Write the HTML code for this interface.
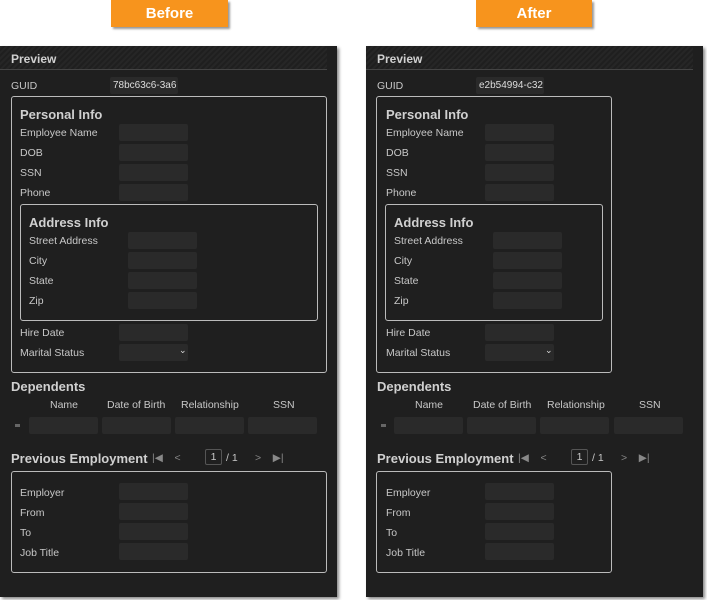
<!DOCTYPE html>
<html><head><style>
*{box-sizing:border-box;margin:0;padding:0}
body{width:707px;height:600px;background:#fff;position:relative;overflow:hidden;font-family:"Liberation Sans",sans-serif;font-size:10.5px;color:#c8c8c8}
.tag{position:absolute;top:0;height:27px;background:#f7941d;color:#fff;font-weight:bold;font-size:15px;text-align:center;line-height:27px;box-shadow:2px 2px 2px #999}
.panel{position:absolute;top:46px;height:551px;width:337px;background:#1f1f1f;box-shadow:2px 2px 3px #888}
.hdr{position:absolute;left:0;top:0;width:327px;height:24px;border-bottom:1px solid #444;background:repeating-linear-gradient(135deg,#262626 0 2px,#1f1f1f 2px 4px)}
.a{position:absolute;white-space:nowrap;padding-top:1px}
.t{font-weight:bold;color:#d0d0d0}
.in{position:absolute;width:69px;height:17px;background:#2a2a2a;border-radius:2px}
.g{white-space:nowrap;overflow:hidden;font-size:10px;color:#ddd;padding:3px 0 0 3px}
.box{position:absolute;border:1px solid #bbb;border-radius:3px}
</style></head><body>
<div class="tag" style="left:111px;width:117px">Before</div>
<div class="tag" style="left:476px;width:116px">After</div>

<!-- LEFT -->
<div class="panel" style="left:0">
<div class="hdr"></div>
<div class="a t" style="left:11px;top:5px;font-size:12px">Preview</div>
<div class="a" style="left:11px;top:33px">GUID</div>
<div class="in g" style="left:110px;top:31px;width:68px">78bc63c6-3a6</div>
<div class="box" style="left:11px;top:50px;width:316px;height:277px"></div>
<div class="a t" style="left:20px;top:60px;font-size:13px">Personal Info</div>
<div class="a" style="left:20px;top:80px">Employee Name</div><div class="in" style="left:119px;top:78px"></div>
<div class="a" style="left:20px;top:100px">DOB</div><div class="in" style="left:119px;top:98px"></div>
<div class="a" style="left:20px;top:120px">SSN</div><div class="in" style="left:119px;top:118px"></div>
<div class="a" style="left:20px;top:140px">Phone</div><div class="in" style="left:119px;top:138px"></div>
<div class="box" style="left:20px;top:158px;width:298px;height:117px"></div>
<div class="a t" style="left:29px;top:168px;font-size:13px">Address Info</div>
<div class="a" style="left:29px;top:188px">Street Address</div><div class="in" style="left:128px;top:186px"></div>
<div class="a" style="left:29px;top:208px">City</div><div class="in" style="left:128px;top:206px"></div>
<div class="a" style="left:29px;top:228px">State</div><div class="in" style="left:128px;top:226px"></div>
<div class="a" style="left:29px;top:248px">Zip</div><div class="in" style="left:128px;top:246px"></div>
<div class="a" style="left:20px;top:280px">Hire Date</div><div class="in" style="left:119px;top:278px"></div>
<div class="a" style="left:20px;top:300px">Marital Status</div><div class="in" style="left:119px;top:298px"><span class="a" style="left:60px;top:0px;font-size:9px;color:#ddd">&#8964;</span></div>
<div class="a t" style="left:11px;top:332px;font-size:13px">Dependents</div>
<div class="a" style="left:50px;top:352px">Name</div>
<div class="a" style="left:107px;top:352px">Date of Birth</div>
<div class="a" style="left:181px;top:352px">Relationship</div>
<div class="a" style="left:273px;top:352px">SSN</div>
<div class="a" style="left:15px;top:378px;width:5px;height:3px;background:#666;padding:0"></div>
<div class="in" style="left:29px;top:371px"></div><div class="in" style="left:102px;top:371px"></div><div class="in" style="left:175px;top:371px"></div><div class="in" style="left:248px;top:371px"></div>
<div class="a t" style="left:11px;top:404px;font-size:13px">Previous Employment</div>
<div class="a" style="left:152px;top:405px;color:#888">|◀&nbsp;&nbsp;&nbsp;&nbsp;&lt;</div>
<div class="a" style="left:205px;top:403px;width:17px;height:16px;border:1px solid #555;border-radius:2px;text-align:center;line-height:14px;padding:0">1</div>
<div class="a" style="left:226px;top:405px">/ 1</div>
<div class="a" style="left:255px;top:405px;color:#888">&gt;&nbsp;&nbsp;&nbsp;&nbsp;▶|</div>
<div class="box" style="left:11px;top:425px;width:316px;height:102px"></div>
<div class="a" style="left:20px;top:440px">Employer</div><div class="in" style="left:119px;top:437px"></div>
<div class="a" style="left:20px;top:460px">From</div><div class="in" style="left:119px;top:457px"></div>
<div class="a" style="left:20px;top:480px">To</div><div class="in" style="left:119px;top:477px"></div>
<div class="a" style="left:20px;top:500px">Job Title</div><div class="in" style="left:119px;top:497px"></div>
</div>

<!-- RIGHT -->
<div class="panel" style="left:366px">
<div class="hdr"></div>
<div class="a t" style="left:11px;top:5px;font-size:12px">Preview</div>
<div class="a" style="left:11px;top:33px">GUID</div>
<div class="in g" style="left:110px;top:31px;width:68px">e2b54994-c32</div>
<div class="box" style="left:10px;top:50px;width:236px;height:277px"></div>
<div class="a t" style="left:20px;top:60px;font-size:13px">Personal Info</div>
<div class="a" style="left:20px;top:80px">Employee Name</div><div class="in" style="left:119px;top:78px"></div>
<div class="a" style="left:20px;top:100px">DOB</div><div class="in" style="left:119px;top:98px"></div>
<div class="a" style="left:20px;top:120px">SSN</div><div class="in" style="left:119px;top:118px"></div>
<div class="a" style="left:20px;top:140px">Phone</div><div class="in" style="left:119px;top:138px"></div>
<div class="box" style="left:19px;top:158px;width:218px;height:117px"></div>
<div class="a t" style="left:28px;top:168px;font-size:13px">Address Info</div>
<div class="a" style="left:28px;top:188px">Street Address</div><div class="in" style="left:127px;top:186px"></div>
<div class="a" style="left:28px;top:208px">City</div><div class="in" style="left:127px;top:206px"></div>
<div class="a" style="left:28px;top:228px">State</div><div class="in" style="left:127px;top:226px"></div>
<div class="a" style="left:28px;top:248px">Zip</div><div class="in" style="left:127px;top:246px"></div>
<div class="a" style="left:20px;top:280px">Hire Date</div><div class="in" style="left:119px;top:278px"></div>
<div class="a" style="left:20px;top:300px">Marital Status</div><div class="in" style="left:119px;top:298px"><span class="a" style="left:60px;top:0px;font-size:9px;color:#ddd">&#8964;</span></div>
<div class="a t" style="left:11px;top:332px;font-size:13px">Dependents</div>
<div class="a" style="left:49px;top:352px">Name</div>
<div class="a" style="left:107px;top:352px">Date of Birth</div>
<div class="a" style="left:181px;top:352px">Relationship</div>
<div class="a" style="left:273px;top:352px">SSN</div>
<div class="a" style="left:15px;top:378px;width:5px;height:3px;background:#666;padding:0"></div>
<div class="in" style="left:28px;top:371px"></div><div class="in" style="left:101px;top:371px"></div><div class="in" style="left:174px;top:371px"></div><div class="in" style="left:248px;top:371px"></div>
<div class="a t" style="left:11px;top:404px;font-size:13px">Previous Employment</div>
<div class="a" style="left:152px;top:405px;color:#888">|◀&nbsp;&nbsp;&nbsp;&nbsp;&lt;</div>
<div class="a" style="left:205px;top:403px;width:17px;height:16px;border:1px solid #555;border-radius:2px;text-align:center;line-height:14px;padding:0">1</div>
<div class="a" style="left:226px;top:405px">/ 1</div>
<div class="a" style="left:255px;top:405px;color:#888">&gt;&nbsp;&nbsp;&nbsp;&nbsp;▶|</div>
<div class="box" style="left:10px;top:425px;width:236px;height:102px"></div>
<div class="a" style="left:20px;top:440px">Employer</div><div class="in" style="left:119px;top:437px"></div>
<div class="a" style="left:20px;top:460px">From</div><div class="in" style="left:119px;top:457px"></div>
<div class="a" style="left:20px;top:480px">To</div><div class="in" style="left:119px;top:477px"></div>
<div class="a" style="left:20px;top:500px">Job Title</div><div class="in" style="left:119px;top:497px"></div>
</div>
</body></html>
